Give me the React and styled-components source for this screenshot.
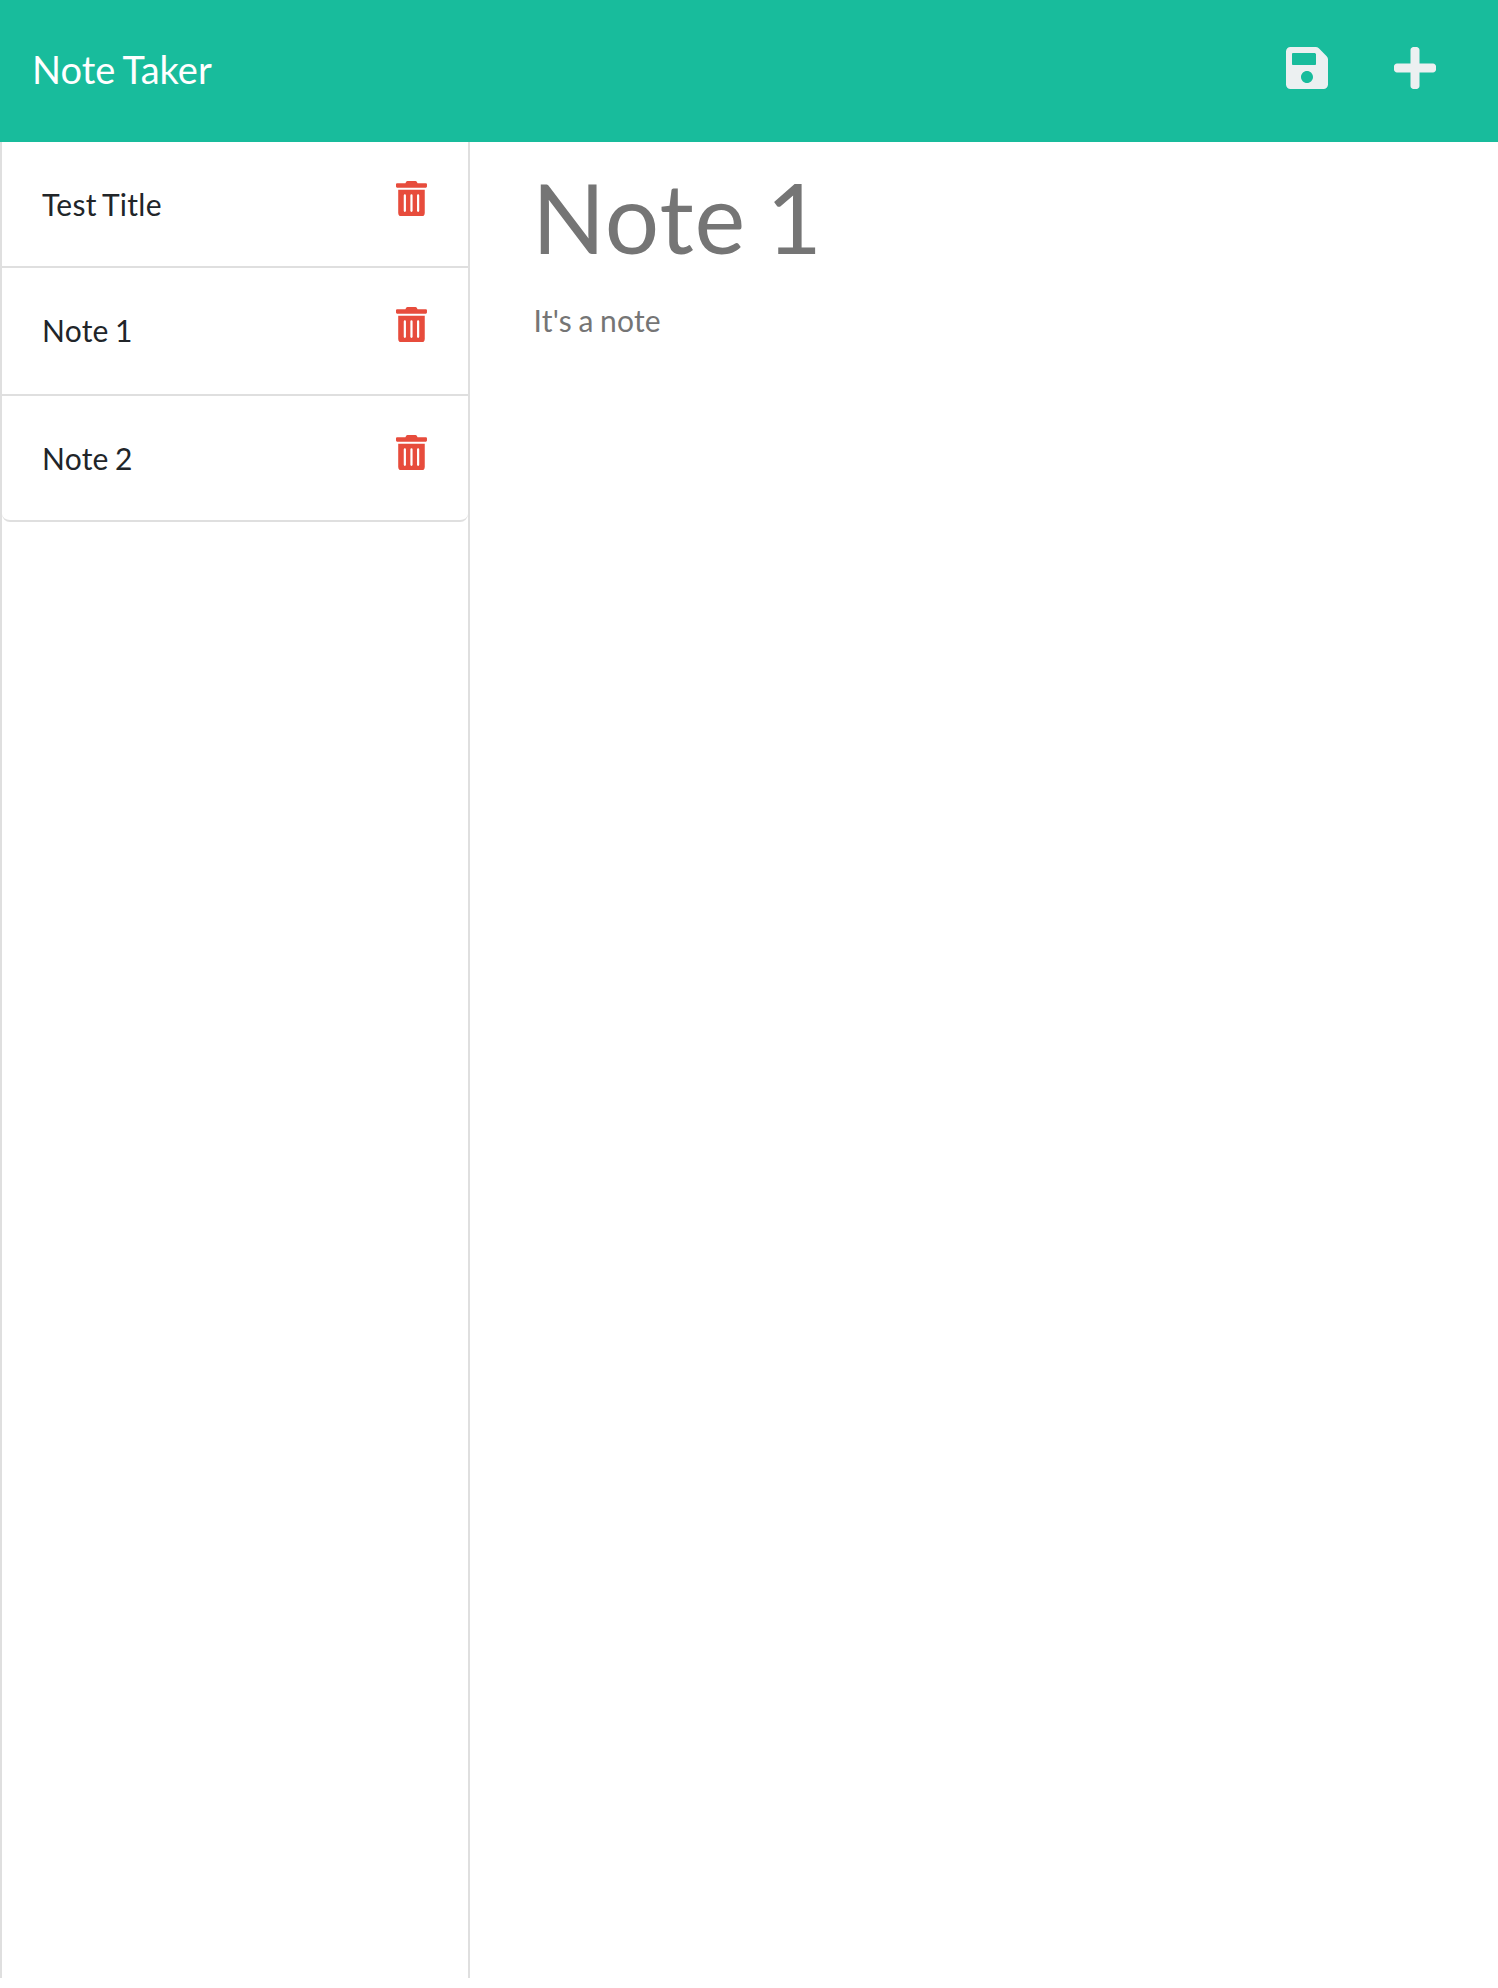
import React, { useState } from 'react';
import styled, { createGlobalStyle } from 'styled-components';

const GlobalStyle = createGlobalStyle`
  * { box-sizing: border-box; }
  body {
    margin: 0;
    background: #fff;
    color: #212529;
    font-family: Lato, 'Liberation Sans', sans-serif;
    font-size: 30px;
    line-height: 45px;
  }
`;

const Navbar = styled.nav`
  display: flex;
  justify-content: space-between;
  align-items: flex-start;
  height: 142px;
  padding: 34px 62px 0 32px;
  background: #18bc9c;
`;

const Brand = styled.a`
  padding-top: 5px;
  color: #fff;
  font-size: 38px;
  line-height: 60px;
  letter-spacing: 0;
  word-spacing: -1.2px;
  white-space: nowrap;
`;

const Actions = styled.div`
  display: flex;
  gap: 66px;
  padding-top: 10px;
`;

const Icon = styled.svg`
  display: block;
  width: ${(p) => p.$size * 0.875}px;
  height: ${(p) => p.$size}px;
  fill: currentColor;
`;

const IconButton = styled.button`
  display: block;
  padding: 0;
  border: 0;
  background: none;
  color: ${(p) => p.$color};
  cursor: pointer;
`;

const Layout = styled.main`
  display: grid;
  grid-template-columns: 470px 1fr;
  height: 1836px;
`;

const Sidebar = styled.aside`
  border: solid #dfdfdf;
  border-width: 0 2px;
`;

const NoteList = styled.ul`
  margin: 0;
  padding: 0;
  list-style: none;
  border-bottom: 2px solid #dfdfdf;
  border-radius: 0 0 8px 8px;
`;

const NoteItem = styled.li`
  display: flex;
  justify-content: space-between;
  align-items: flex-start;
  height: ${(p) => p.$height}px;
  padding: 39px 41px 0 40px;
  cursor: pointer;

  & + & {
    border-top: 2px solid #dfdfdf;
  }
`;

const NoteName = styled.span`
  padding-top: 1px;
  letter-spacing: 0.25px;
  word-spacing: -1.7px;
`;

const Editor = styled.section`
  padding: 17px 32px 0 62px;
  color: #757575;
`;

const NoteTitle = styled.h1`
  margin: 0 0 24px;
  font-size: 96px;
  font-weight: 400;
  line-height: 115px;
  letter-spacing: 1px;
  word-spacing: -5.5px;
`;

const NoteText = styled.p`
  margin: 0;
  padding-left: 1.5px;
  letter-spacing: 0.25px;
  word-spacing: -1.6px;
`;

const paths = {
  save: 'M433.941 129.941l-83.882-83.882A48 48 0 0 0 316.118 32H48C21.49 32 0 53.49 0 80v352c0 26.51 21.49 48 48 48h352c26.51 0 48-21.49 48-48V163.882a48 48 0 0 0-14.059-33.941zM224 416c-35.346 0-64-28.654-64-64 0-35.346 28.654-64 64-64s64 28.654 64 64c0 35.346-28.654 64-64 64zm96-304.52V212c0 6.627-5.373 12-12 12H76c-6.627 0-12-5.373-12-12V108c0-6.627 5.373-12 12-12h228.52c3.183 0 6.235 1.264 8.485 3.515l3.48 3.48A11.996 11.996 0 0 1 320 111.48z',
  plus: 'M416 208H272V64c0-17.67-14.33-32-32-32h-32c-17.67 0-32 14.33-32 32v144H32c-17.67 0-32 14.33-32 32v32c0 17.67 14.33 32 32 32h144v144c0 17.67 14.33 32 32 32h32c17.67 0 32-14.33 32-32V304h144c17.67 0 32-14.33 32-32v-32c0-17.67-14.33-32-32-32z',
  trash: 'M32 464a48 48 0 0 0 48 48h288a48 48 0 0 0 48-48V128H32zm272-256a16 16 0 0 1 32 0v224a16 16 0 0 1-32 0zm-96 0a16 16 0 0 1 32 0v224a16 16 0 0 1-32 0zm-96 0a16 16 0 0 1 32 0v224a16 16 0 0 1-32 0zM432 32H312l-9.400-18.700A24 24 0 0 0 281.100 0H166.800a23.720 23.720 0 0 0-21.400 13.300L136 32H16A16 16 0 0 0 0 48v32a16 16 0 0 0 16 16h416a16 16 0 0 0 16-16V48a16 16 0 0 0-16-16z',
};

function Glyph({ name, size }) {
  return (
    <Icon viewBox="0 0 448 512" $size={size} aria-hidden="true">
      <path d={paths[name]} />
    </Icon>
  );
}

const initialNotes = [
  { id: 1, title: 'Test Title', text: 'Test text', height: 124 },
  { id: 2, title: 'Note 1', text: "It's a note", height: 128 },
  { id: 3, title: 'Note 2', text: "It's another note", height: 126 },
];

export default function App() {
  const [notes, setNotes] = useState(initialNotes);
  const [active, setActive] = useState(initialNotes[1]);

  const remove = (event, id) => {
    event.stopPropagation();
    setNotes(notes.filter((note) => note.id !== id));
  };

  return (
    <>
      <GlobalStyle />
      <Navbar>
        <Brand>Note Taker</Brand>
        <Actions>
          <IconButton $color="#ecf0f1">
            <Glyph name="save" size={48} />
          </IconButton>
          <IconButton $color="#ecf0f1">
            <Glyph name="plus" size={48} />
          </IconButton>
        </Actions>
      </Navbar>
      <Layout>
        <Sidebar>
          <NoteList>
            {notes.map((note) => (
              <NoteItem key={note.id} $height={note.height} onClick={() => setActive(note)}>
                <NoteName>{note.title}</NoteName>
                <IconButton $color="#e74c3c" onClick={(e) => remove(e, note.id)}>
                  <Glyph name="trash" size={35.4} />
                </IconButton>
              </NoteItem>
            ))}
          </NoteList>
        </Sidebar>
        <Editor>
          <NoteTitle>{active.title}</NoteTitle>
          <NoteText>{active.text}</NoteText>
        </Editor>
      </Layout>
    </>
  );
}
